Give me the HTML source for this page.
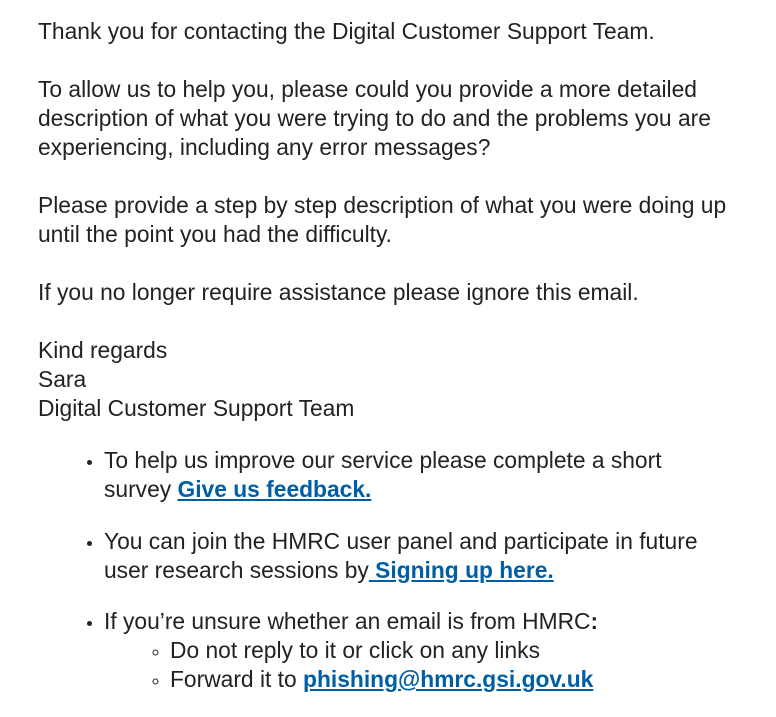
<!DOCTYPE html>
<html><head><meta charset="utf-8"><style>
html,body{margin:0;padding:0;background:#fff;}
body{font-family:"Liberation Sans",sans-serif;font-size:22.8px;line-height:29px;color:#222;width:776px;height:708px;overflow:hidden;}
.c{position:absolute;left:38px;top:17px;width:720px;}
p{margin:0 0 29px 0;}
a{color:#005ea5;font-weight:bold;text-decoration:underline;}
ul.m{margin:0;padding-left:66px;padding-right:30px;list-style:disc;}
ul.m>li{margin-bottom:22.5px;}
ul.s{margin:0;padding-left:66px;list-style:circle;}
ul.s>li{margin:0;}
li::marker{font-size:17px;}
</style></head><body><div class="c">
<p>Thank you for contacting the Digital Customer Support Team.</p>
<p>To allow us to help you, please could you provide a more detailed description of what you were trying to do and the problems you are experiencing, including any error messages?</p>
<p>Please provide a step by step description of what you were doing up until the point you had the difficulty.</p>
<p>If you no longer require assistance please ignore this email.</p>
<p style="margin-bottom:23px">Kind regards<br>Sara<br>Digital Customer Support Team</p>
<ul class="m">
<li>To help us improve our service please complete a short survey <a>Give us feedback.</a></li>
<li>You can join the HMRC user panel and participate in future user research sessions by<a> Signing up here.</a></li>
<li>If you’re unsure whether an email is from HMRC<b>:</b>
<ul class="s"><li>Do not reply to it or click on any links</li><li>Forward it to <a>phishing@hmrc.gsi.gov.uk</a></li></ul></li>
</ul>
</div></body></html>
